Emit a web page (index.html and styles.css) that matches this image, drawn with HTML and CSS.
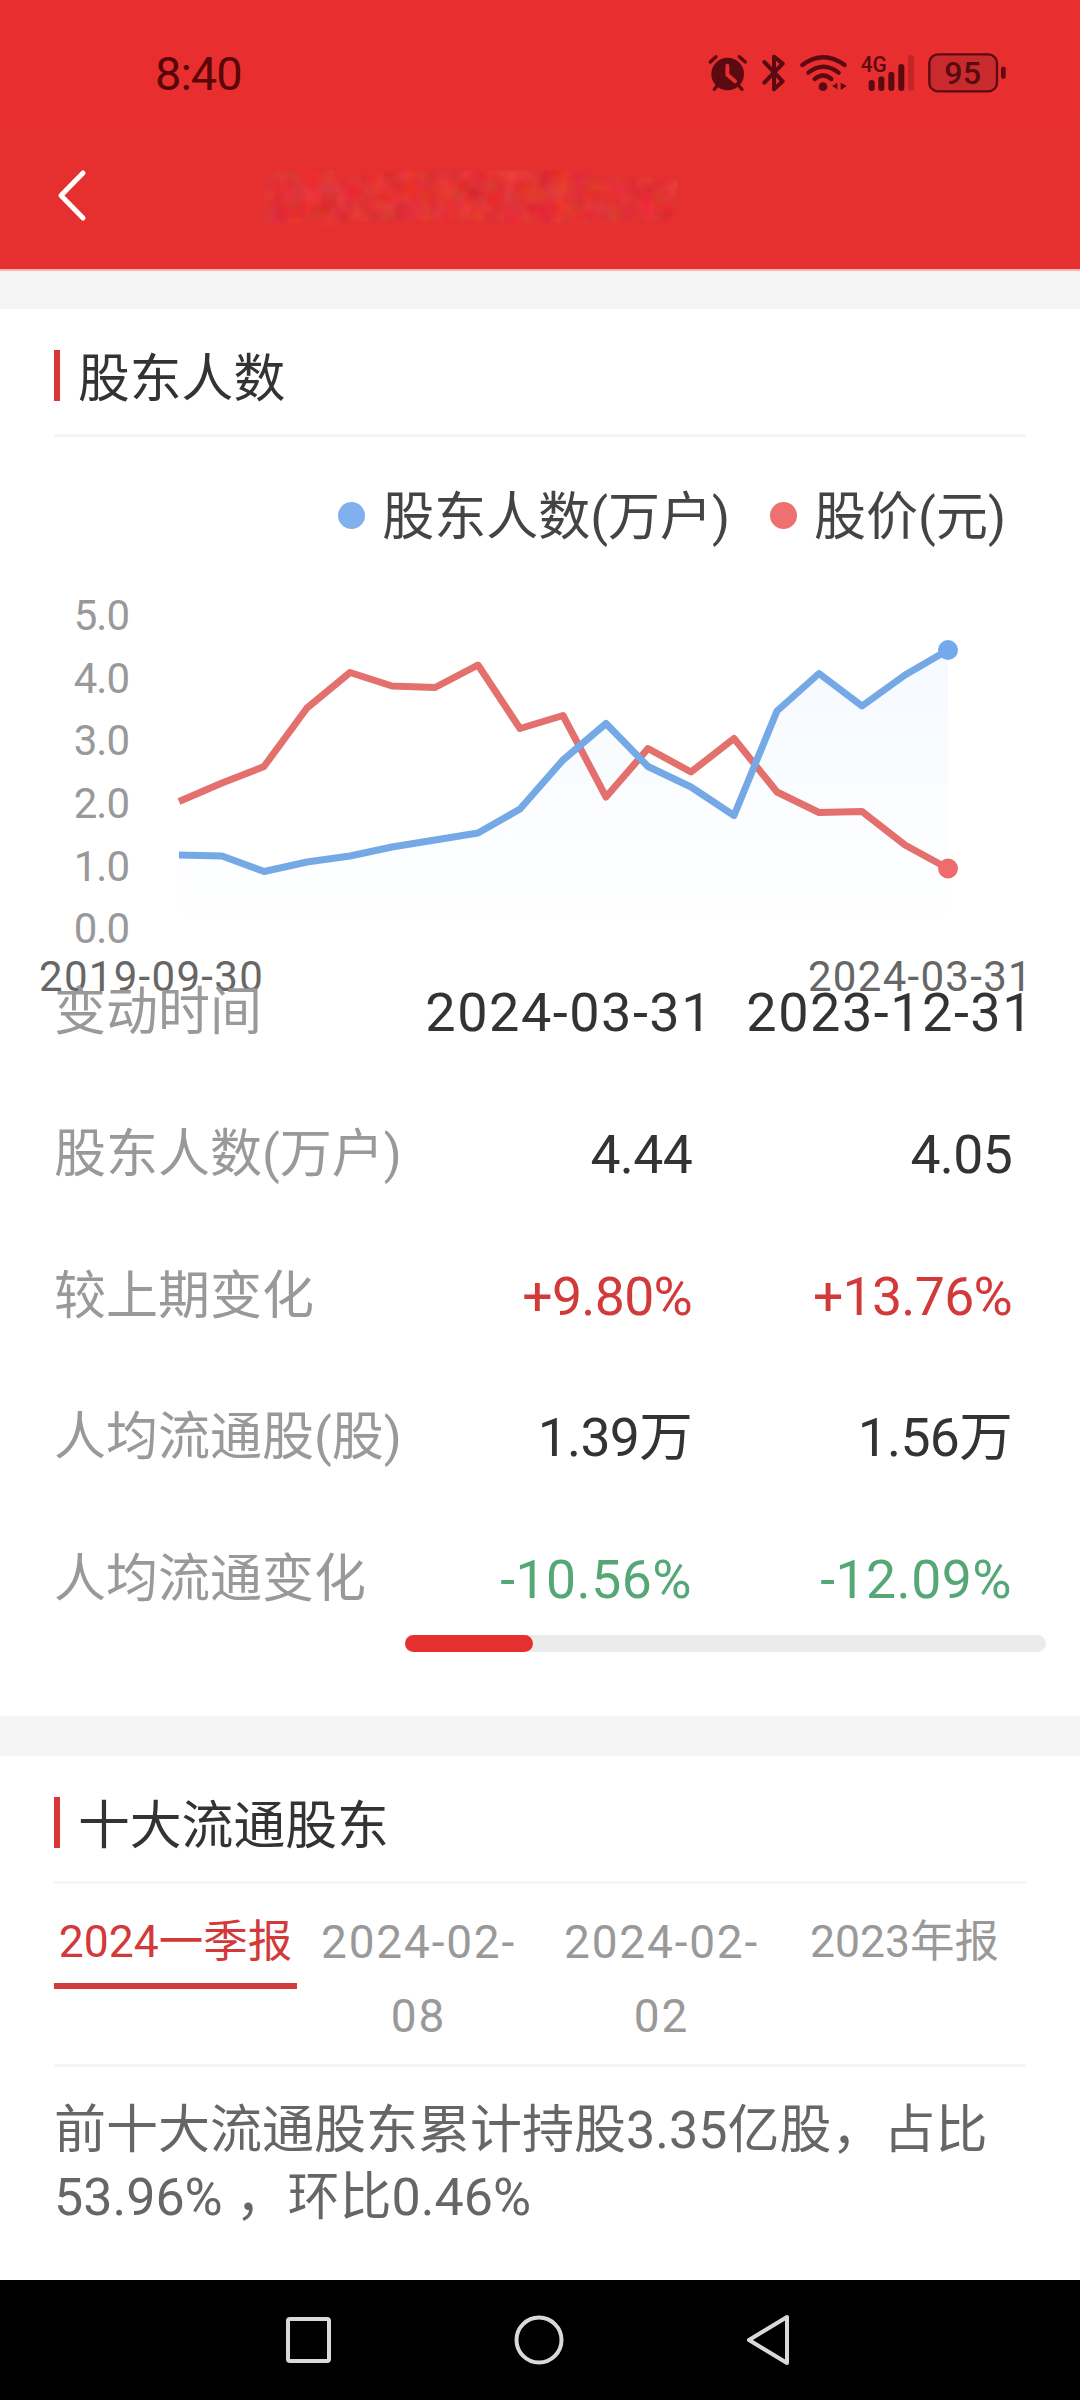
FILE: index.html
```html
<!DOCTYPE html>
<html lang="zh-CN">
<head>
  <meta charset="UTF-8">
  <meta name="viewport" content="width=device-width, initial-scale=1.0">
  <title>股东人数</title>
  <link rel="stylesheet" href="styles.css">
</head>
<body>
  <div class="status-bar">
    <span class="time">8:40</span>
    <div class="status-icons">
      <svg class="icon-alarm" width="40" height="42" viewBox="54 66 118 126" fill="none" stroke="#5a0a10" stroke-width="10" stroke-linecap="round">
        <circle cx="112" cy="132" r="49" fill="#5a0a10" stroke="none"/>
        <path d="M60 96L77 80M147 80L165 96M80 168L72 178M146 168L155 178"/>
        <path d="M111 107V134L134 154" stroke="#e82e2f" stroke-width="12"/>
      </svg>
      <svg class="icon-bt" width="25" height="42" viewBox="211 66 75 126" fill="none" stroke="#5a0a10" stroke-width="12" stroke-linecap="round" stroke-linejoin="round">
        <path d="M221 96L276 154L250 178V80L276 101L221 158"/>
      </svg>
      <svg class="icon-wifi" width="48" height="42" viewBox="328 66 144 126" fill="none" stroke="#5a0a10" stroke-width="13" stroke-linecap="round">
        <path d="M335 105Q398 58 462 105M353 128Q398 92 444 128M372 147Q398 126 422 147"/>
        <circle cx="397" cy="170" r="13" fill="#5a0a10" stroke="none"/>
        <path d="M440 158V178L424 168ZM450 158V180L468 168Z" fill="#5a0a10" stroke="none"/>
      </svg>
      <svg class="icon-signal" width="55" height="42" viewBox="508 66 165 126">
        <text class="net" x="510" y="127" textLength="78" lengthAdjust="spacingAndGlyphs">4G</text>
        <g stroke="#5a0a10" stroke-width="18" stroke-linecap="round">
          <path d="M543 159V174M572 148V174M602 134V174M632 111V174"/>
          <path d="M661 84V174" opacity=".25"/>
        </g>
      </svg>
      <svg class="icon-battery" width="79" height="42" viewBox="714 66 237 126">
        <rect x="718" y="73" width="203" height="111" rx="26" fill="#c92a2e" stroke="#5a0a10" stroke-width="7"/>
        <rect x="933" y="110" width="14" height="36" rx="5" fill="#5a0a10"/>
        <text class="level" x="763" y="163" textLength="110" lengthAdjust="spacingAndGlyphs">95</text>
      </svg>
    </div>
  </div>
  <div class="header">
    <svg class="back" width="32" height="52" viewBox="0 0 32 52" fill="none" stroke="#fff" stroke-width="5" stroke-linecap="round" stroke-linejoin="round">
      <path d="M27 4L5 26.5L27 49"/>
    </svg>
    <svg class="title-mask" width="430" height="70" viewBox="0 0 430 70">
      <defs>
        <filter id="smear" x="0" y="0" width="100%" height="100%" color-interpolation-filters="sRGB">
          <feTurbulence type="fractalNoise" baseFrequency="0.06 0.05" numOctaves="3" seed="4"/>
          <feColorMatrix values="0.4 0 0 0 0.67  0 0.4 0 0 0.02  0 0 0.4 0 0.03  0 0 0 0 0.4"/>
          <feComposite in2="SourceGraphic" operator="in"/>
          <feGaussianBlur stdDeviation="1.5"/>
        </filter>
      </defs>
      <path filter="url(#smear)" d="M10 10L80 8L84 20L130 10L300 8L350 14L424 18L420 58L330 62L200 58L90 60L70 66L60 60L10 62Z"/>
    </svg>
  </div>

  <div class="section holders">
    <h2 class="section-title"><span>股东人数</span></h2>
    <div class="legend">
      <span class="legend-item"><i class="dot blue"></i><span>股东人数(万户)</span></span>
      <span class="legend-item"><i class="dot red"></i><span>股价(元)</span></span>
    </div>
    <div class="chart">
      <div class="y-axis">
        <span>5.0</span><span>4.0</span><span>3.0</span><span>2.0</span><span>1.0</span><span>0.0</span>
      </div>
      <svg class="plot" width="800" height="376" viewBox="170 584 800 376" fill="none">
        <defs>
          <linearGradient id="area" x1="0" y1="0" x2="0" y2="1">
            <stop offset="0" stop-color="#f5faff"/>
            <stop offset="1" stop-color="#fff"/>
          </linearGradient>
        </defs>
        <path fill="url(#area)" d="M179 855L222 856L264 872L307 862L350 856L392 847L435 840L478 833L520 809L563 760L606 723L648 767L691 787L734 816L777 711L819 673L862 706L905 675L948 650V929H179Z"/>
        <polyline stroke="#e4706e" stroke-width="7" stroke-linejoin="round" points="179,801.5 222,783 264,766.5 307,708 350,672.5 392,686 435,687.5 478,665 520,728.5 563,715.5 606,797 648,748.5 691,772 734,738.5 777,792 819,812.5 862,811.5 905,845 948,868.5"/>
        <polyline stroke="#74a9e6" stroke-width="7" stroke-linejoin="round" points="179,855 222,856 264,871.5 307,862 350,856 392,847 435,840 478,833 520,809 563,760 606,723.5 648,766.5 691,787 734,815.5 777,711 819,673.5 862,706 905,675 948,650"/>
        <circle cx="948" cy="868.5" r="10" fill="#ee6c6e"/>
        <circle cx="948" cy="650" r="10" fill="#72aaec"/>
      </svg>
    </div>
    <div class="x-axis"><span>2019-09-30</span><span>2024-03-31</span></div>
    <div class="table">
      <div class="row dates"><span>变动时间</span><b>2024-03-31</b><b>2023-12-31</b></div>
      <div class="row"><span>股东人数(万户)</span><b>4.44</b><b>4.05</b></div>
      <div class="row"><span>较上期变化</span><b class="up">+9.80%</b><b class="up">+13.76%</b></div>
      <div class="row"><span>人均流通股(股)</span><b>1.39万</b><b>1.56万</b></div>
      <div class="row"><span>人均流通变化</span><b class="down">-10.56%</b><b class="down">-12.09%</b></div>
    </div>
    <div class="scroll-track"><div class="scroll-thumb"></div></div>
  </div>

  <div class="section top-ten">
    <h2 class="section-title"><span>十大流通股东</span></h2>
    <div class="tabs">
      <div class="tab active">2024一季报</div>
      <div class="tab date">2024-02-<br>08</div>
      <div class="tab date">2024-02-<br>02</div>
      <div class="tab">2023年报</div>
    </div>
    <p class="summary">前十大流通股东累计持股3.35亿股，占比<br>53.96% ，环比0.46%</p>
  </div>

  <div class="nav-bar">
    <svg width="50" height="54" viewBox="0 0 50 54" fill="none" stroke="#d9d9d9" stroke-width="4"><rect x="4" y="6" width="41" height="42" rx="2"/></svg>
    <svg width="54" height="54" viewBox="0 0 54 54" fill="none" stroke="#d9d9d9" stroke-width="4"><circle cx="27" cy="27" r="22.5"/></svg>
    <svg width="50" height="54" viewBox="0 0 50 54" fill="none" stroke="#d9d9d9" stroke-width="4" stroke-linejoin="round"><path d="M43 4V50L5 27Z"/></svg>
  </div>
</body>
</html>
```
FILE: styles.css
```css
* { box-sizing: border-box; margin: 0; padding: 0; }
body {
  width: 1080px;
  height: 2400px;
  display: flex;
  flex-direction: column;
  overflow: hidden;
  background-color: #f5f5f5;
  color: #333;
  font-family: Roboto, "Noto Sans CJK SC", sans-serif;
  font-size: 52px;
}
svg { display: block; flex: none; overflow: visible; }
.status-bar {
  height: 124px;
  display: flex;
  align-items: flex-start;
  justify-content: space-between;
  padding: 52px 73px 0 155px;
  background-color: #e82e2f;
  color: #5a0508;
}
.time {
  font-size: 47px;
  line-height: 44px;
  letter-spacing: -1px;
}
.status-icons { display: flex; }
.icon-bt { margin-left: 13px; }
.icon-wifi { margin-left: 14px; }
.icon-signal { margin-left: 12px; }
.icon-battery { margin-left: 13px; }
.net { font-size: 66px; font-weight: 500; fill: #5a0a10; }
.level { font-size: 96px; font-weight: 500; fill: #5a0a10; }
.header {
  height: 147px;
  display: flex;
  align-items: flex-start;
  padding: 45px 0 0 56px;
  background-color: #e63030;
  border-bottom: 2px solid #f5b5b5;
}
.title-mask { margin-left: 166px; margin-top: -7px; }

.section { background-color: #fff; }
.holders {
  height: 1407px;
  margin-top: 38px;
}
.section-title {
  display: flex;
  align-items: center;
  height: 128px;
  margin: 0 54px;
  padding-top: 7px;
  border-bottom: 3px solid #f5f5f5;
  font-size: 51.8px;
  font-weight: 400;
  line-height: 56px;
}
.section-title span { padding-top: 10px; }
.section-title::before {
  content: "";
  width: 6px;
  height: 51px;
  margin-right: 18px;
  background-color: #d83636;
}
.legend {
  display: flex;
  justify-content: flex-end;
  gap: 40px;
  height: 116px;
  padding: 40px 74px 0 0;
  color: #444;
  line-height: 76px;
}
.legend-item { display: flex; align-items: center; }
.legend-item span { padding-top: 6px; }
.dot {
  width: 27px;
  height: 27px;
  margin-right: 17px;
  border-radius: 50%;
}
.blue { background-color: #80b1ee; }
.red { background-color: #ec7170; }

.chart {
  display: flex;
  height: 376px;
  margin-top: 31px;
}
.y-axis {
  width: 129px;
  margin-right: 41px;
  padding-top: 1px;
  text-align: right;
  font-size: 42px;
  letter-spacing: -1px;
  color: #999;
}
.y-axis span {
  display: block;
  height: 62.7px;
  line-height: 62.7px;
}
.x-axis {
  display: flex;
  justify-content: space-between;
  height: 0;
  padding: 0 47px 0 39px;
  font-size: 42px;
  line-height: 34px;
  letter-spacing: 1.3px;
  color: #666;
}
.table { margin-top: -18px; }
.row {
  display: grid;
  grid-template-columns: 405px 287px 320px;
  height: 141.8px;
  line-height: 141.8px;
}
.row span { padding-left: 54px; color: #999; white-space: nowrap; }
.row b {
  font-size: 53.5px;
  font-weight: 400;
  text-align: right;
  letter-spacing: -0.7px;
  white-space: nowrap;
}
.dates { grid-template-columns: 405px 308px 321px; }
.dates b { font-size: 54px; letter-spacing: 1.5px; }
.row .up { color: #d23a3a; }
.row .down { color: #56a776; letter-spacing: 0.5px; }
.scroll-track {
  width: 641px;
  height: 17px;
  margin: -16px 0 0 405px;
  border-radius: 9px;
  background-color: #ebebeb;
}
.scroll-thumb {
  width: 128px;
  height: 17px;
  border-radius: 9px;
  background-color: #e63030;
}

.top-ten {
  height: 524px;
  margin-top: 40px;
}
.tabs {
  display: flex;
  height: 183px;
  margin: 0 54px;
  padding-top: 21px;
  border-bottom: 3px solid #f5f5f5;
  font-size: 44.5px;
  line-height: 74px;
  color: #999;
}
.tab { width: 243px; text-align: center; }
.tab.date { font-size: 46px; letter-spacing: 1.8px; }
.tab.active {
  height: 84px;
  border-bottom: 6px solid #d03c3b;
  color: #d23a3a;
}
.summary {
  padding: 30px 0 0 54px;
  line-height: 67px;
  white-space: nowrap;
  color: #666;
}
.nav-bar {
  height: 120px;
  display: flex;
  align-items: center;
  gap: 178px;
  padding-left: 284px;
  background-color: #000;
}
```
